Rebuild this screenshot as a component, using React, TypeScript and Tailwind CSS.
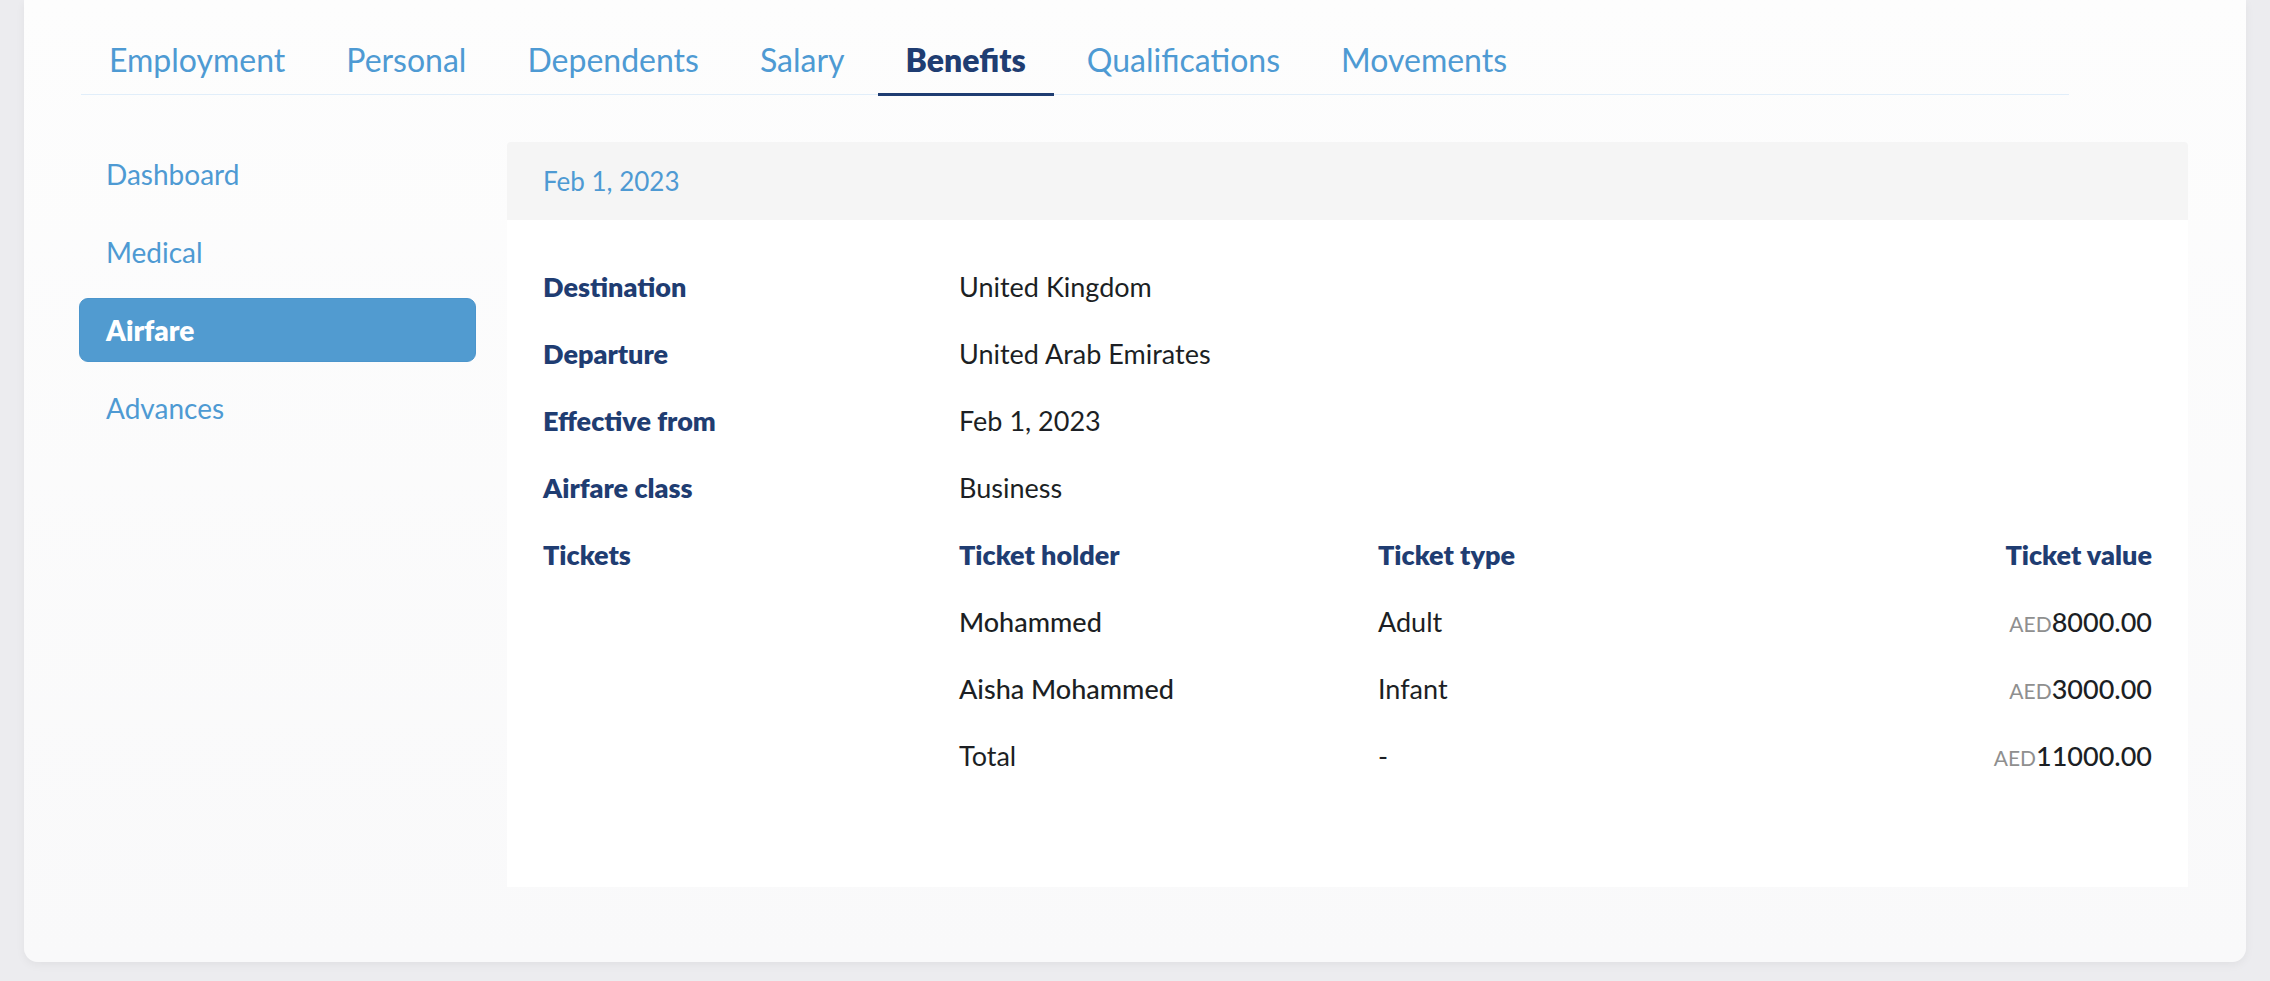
import React from 'react';

const tabs = ['Employment', 'Personal', 'Dependents', 'Salary', 'Benefits', 'Qualifications', 'Movements'];
const sideItems = ['Dashboard', 'Medical', 'Airfare', 'Advances'];

const details = [
    { label: 'Destination', value: 'United Kingdom' },
    { label: 'Departure', value: 'United Arab Emirates' },
    { label: 'Effective from', value: 'Feb 1, 2023' },
    { label: 'Airfare class', value: 'Business' },
];

const tickets = [
    { holder: 'Mohammed', type: 'Adult', value: '8000.00' },
    { holder: 'Aisha Mohammed', type: 'Infant', value: '3000.00' },
];

function Amount({ value }: { value: string }) {
    return (
        <span className="inline-flex items-baseline">
            <span className="text-[21px] text-[#8f8f8f]">AED</span>
            <span className="font-medium text-[#1c1f24]">{value}</span>
        </span>
    );
}

export default function App() {
    const active = 'Benefits';
    const activeSide = 'Airfare';

    return (
        <div className="min-h-screen bg-[#ececef] px-[24px] pb-[19px] font-['Lato',_'Noto_Sans',_sans-serif]">
            <div className="h-[962px] rounded-b-[14px] bg-linear-to-b from-[#fdfdfd] to-[#f9f9fa] pl-[57px] pr-[58px] pt-[41px] shadow-[0_3px_10px_rgba(0,0,0,0.05)]">
                {/* Tabs */}
                <div className="flex w-[1988px] gap-[5px] border-b border-[#e1eefa]">
                    {tabs.map((t) => (
                        <div
                            key={t}
                            className={`-mb-[2px] border-b-[3px] px-[28px] pb-[14px] text-[32px] leading-[38px] ${
                                t === active
                                    ? 'border-[#1f3d72] font-extrabold text-[#1f3d72]'
                                    : 'border-transparent text-[#4e9ad3]'
                            }`}
                        >
                            {t}
                        </div>
                    ))}
                </div>

                <div className="mt-[47px] flex gap-[30px]">
                    {/* Side menu */}
                    <div className="-ml-[2px] mr-[1px] flex w-[397px] shrink-0 flex-col gap-[14px]">
                        {sideItems.map((s) =>
                            s === activeSide ? (
                                <div
                                    key={s}
                                    className="flex h-[64px] items-center rounded-[9px] border border-[#4b95cc] bg-[#519bd0] pl-[26px] text-[28px] font-extrabold text-white"
                                >
                                    {s}
                                </div>
                            ) : (
                                <div key={s} className="flex h-[64px] items-center pl-[27px] text-[28px] text-[#4e9ad3]">
                                    {s}
                                </div>
                            )
                        )}
                    </div>

                    {/* Panel */}
                    <div className="flex-1">
                        <div className="flex h-[78px] items-center rounded-t-[4px] bg-[#f5f5f5] px-[36px] text-[26px] text-[#4e9ad3]">
                            Feb 1, 2023
                        </div>
                        <div className="bg-white px-[36px] pb-[97px] pt-[34px] text-[27px] text-[#1c1f24]">
                            {details.map((d) => (
                                <div key={d.label} className="flex h-[67px] items-center">
                                    <div className="w-[416px] font-extrabold text-[#1f3d72]">{d.label}</div>
                                    <div>{d.value}</div>
                                </div>
                            ))}

                            <div className="flex h-[67px] items-center">
                                <div className="w-[416px] font-extrabold text-[#1f3d72]">Tickets</div>
                                <div className="w-[419px] font-extrabold text-[#1f3d72]">Ticket holder</div>
                                <div className="flex-1 font-extrabold text-[#1f3d72]">Ticket type</div>
                                <div className="font-extrabold text-[#1f3d72]">Ticket value</div>
                            </div>

                            {tickets.map((tk) => (
                                <div key={tk.holder} className="flex h-[67px] items-center">
                                    <div className="w-[416px]" />
                                    <div className="w-[419px] font-medium">{tk.holder}</div>
                                    <div className="flex-1">{tk.type}</div>
                                    <Amount value={tk.value} />
                                </div>
                            ))}

                            <div className="flex h-[67px] items-center">
                                <div className="w-[416px]" />
                                <div className="w-[419px]">Total</div>
                                <div className="flex-1">-</div>
                                <Amount value="11000.00" />
                            </div>
                        </div>
                    </div>
                </div>
            </div>
        </div>
    );
}
